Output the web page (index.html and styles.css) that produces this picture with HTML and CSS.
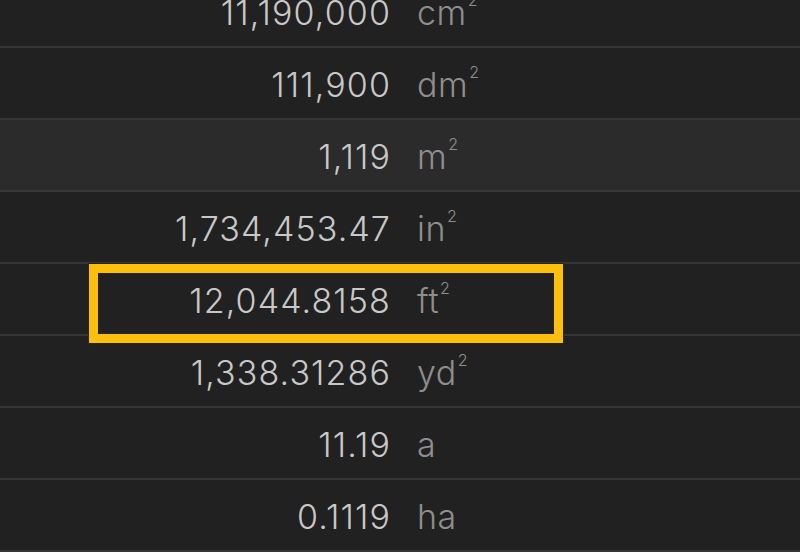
FILE: index.html
```html
<!DOCTYPE html>
<html lang="en">
<head>
<meta charset="utf-8">
<title>Area units</title>
<link rel="stylesheet" href="styles.css">
</head>
<body>
<div class="list">
  <div class="row"><span class="num">11,190,000</span><span class="unit">cm<span class="sup">2</span></span></div>
  <div class="row"><span class="num">111,900</span><span class="unit">dm<span class="sup">2</span></span></div>
  <div class="row active"><span class="num">1,119</span><span class="unit">m<span class="sup">2</span></span></div>
  <div class="row"><span class="num">1,734,453.47</span><span class="unit">in<span class="sup">2</span></span></div>
  <div class="row marked"><span class="num">12,044.8158</span><span class="unit">ft<span class="sup">2</span></span><div class="box"></div></div>
  <div class="row"><span class="num">1,338.31286</span><span class="unit">yd<span class="sup">2</span></span></div>
  <div class="row"><span class="num">11.19</span><span class="unit">a</span></div>
  <div class="row"><span class="num">0.1119</span><span class="unit">ha</span></div>
</div>
</body>
</html>
```
FILE: styles.css
```css
html, body {
  margin: 0;
  padding: 0;
  background: #212121;
  overflow: hidden;
}
body {
  width: 800px;
  height: 552px;
  font-family: Inter, Roboto, "Liberation Sans", sans-serif;
}
.list {
  margin-top: -24px;
}
.row {
  position: relative;
  display: grid;
  grid-template-columns: 390px 1fr;
  height: 70px;
  border-bottom: 2px solid #363636;
  font-size: 34px;
  line-height: 74px;
  font-weight: 300;
}
.row.active {
  background: #2b2b2b;
}
.num {
  text-align: right;
  color: #c8c8c8;
  white-space: nowrap;
  letter-spacing: 1.1px;
  margin-right: -1px;
}
.unit {
  padding-left: 27px;
  color: #8e8e8e;
  white-space: nowrap;
  letter-spacing: 0.5px;
}
.sup {
  font-size: 16px;
  margin-left: 1px;
  vertical-align: 19px;
  line-height: 1;
}
.box {
  position: absolute;
  left: 89px;
  top: 0;
  width: 474px;
  height: 79px;
  box-sizing: border-box;
  border: 9px solid #fbbf0e;
  box-shadow: 0 0 0 1px #2a2206, inset 0 0 0 1px #2a2206;
  z-index: 2;
}
```
